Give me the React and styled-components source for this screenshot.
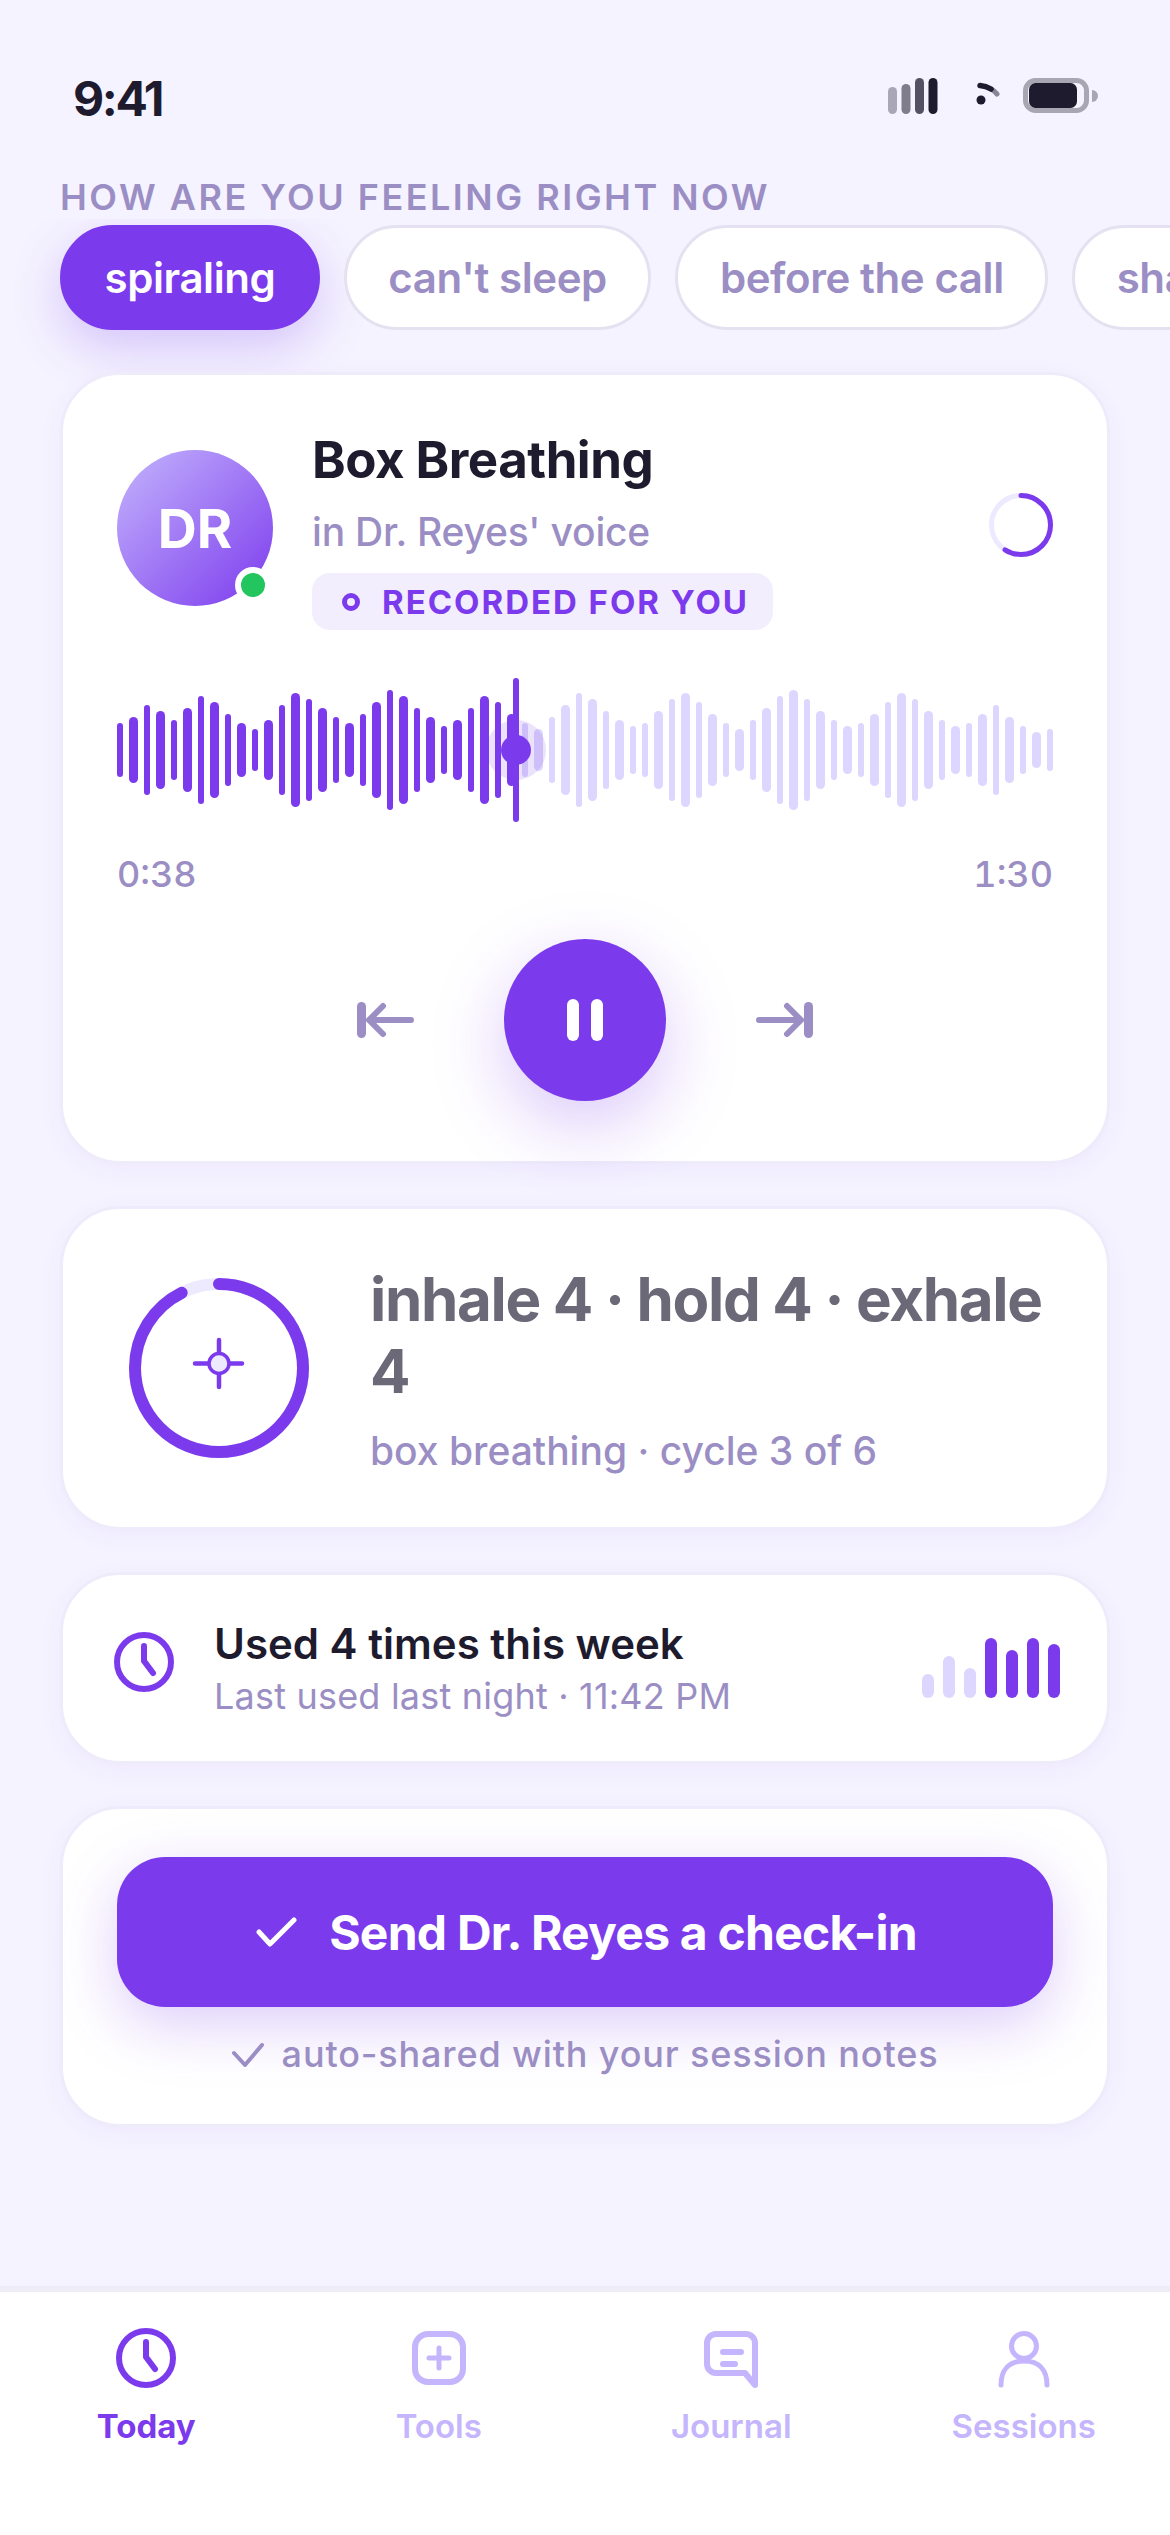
import React from 'react';
import styled, { createGlobalStyle } from 'styled-components';

const PURPLE = '#7c3aed';
const MUTED = '#9b8ec4';
const INK = '#1e1b2e';
const LILAC = '#ddd6fe';
const TAB_OFF = '#c4b5fd';

const GlobalStyle = createGlobalStyle`
  html, body {
    margin: 0;
    padding: 0;
    background: #f5f3ff;
  }
  * { box-sizing: border-box; }
  body {
    font-family: Inter, "Noto Sans", sans-serif;
    -webkit-font-smoothing: antialiased;
  }
`;

const Screen = styled.div`
  width: 1170px;
  height: 2535px;
  display: flex;
  flex-direction: column;
  overflow: hidden;
  background: #f5f3ff;
`;

const Main = styled.main`
  flex: 1;
  min-height: 0;
`;

const StatusBar = styled.div`
  height: 175px;
  padding: 21px 72px 0;
  display: flex;
  align-items: center;
  justify-content: space-between;
`;

const Clock = styled.span`
  font-size: 48px;
  font-weight: 700;
  letter-spacing: -0.05em;
  color: ${INK};
  margin-left: 1px;
`;

const StatusIcons = styled.div`
  display: flex;
  align-items: center;
  margin-bottom: 4px;
`;

const FeelingLabel = styled.div`
  padding: 0 60px;
  font-size: 36px;
  line-height: 44px;
  font-weight: 600;
  letter-spacing: 2.5px;
  color: ${MUTED};
  text-transform: uppercase;
`;

// bottom padding leaves room for the active chip's glow, the margin takes it back
const ChipRow = styled.div`
  display: flex;
  gap: 24px;
  padding: 6px 0 60px 60px;
  margin-bottom: -60px;
  overflow: hidden;
`;

const Chip = styled.div`
  flex: none;
  height: 105px;
  padding: 0 41.5px;
  display: flex;
  align-items: center;
  border-radius: 60px;
  font-size: 42px;
  font-weight: 600;
  letter-spacing: -0.01em;
  background: ${(p) => (p.$active ? PURPLE : '#fff')};
  color: ${(p) => (p.$active ? '#fff' : MUTED)};
  border: 3px solid ${(p) => (p.$active ? PURPLE : '#e5e1f1')};
  box-shadow: ${(p) => (p.$active ? '0 18px 48px rgba(124,58,237,.25)' : 'none')};
`;

const Stack = styled.div`
  display: flex;
  flex-direction: column;
  gap: 42px;
  padding: 42px 60px 0;
`;

const Card = styled.section`
  background: #fff;
  border: 3px solid #eeebfb;
  border-radius: 60px;
  box-shadow: 0 6px 24px rgba(124, 58, 237, 0.05);
`;

const PlayerCard = styled(Card)`
  height: 792px;
  padding: 54px 54px 0;
`;

const PlayerHead = styled.div`
  display: flex;
  align-items: center;
  gap: 39px;
`;

const Avatar = styled.div`
  position: relative;
  flex: none;
  width: 156px;
  height: 156px;
  margin-bottom: 3px;
  border-radius: 50%;
  background: linear-gradient(135deg, #c4b5fd, ${PURPLE});
  color: #fff;
  font-size: 54px;
  font-weight: 700;
  display: flex;
  align-items: center;
  justify-content: center;
`;

const OnlineDot = styled.span`
  position: absolute;
  right: 2px;
  bottom: 3px;
  width: 36px;
  height: 36px;
  border-radius: 50%;
  background: #22c55e;
  border: 6px solid #fff;
`;

const HeadText = styled.div`
  flex: 1;
  display: flex;
  flex-direction: column;
  align-items: flex-start;
  gap: 18px;
`;

const TrackTitle = styled.h1`
  margin: 0;
  font-size: 51px;
  line-height: 61px;
  font-weight: 700;
  letter-spacing: -0.01em;
  color: ${INK};
`;

const TrackVoice = styled.div`
  font-size: 39px;
  line-height: 47px;
  font-weight: 500;
  letter-spacing: -0.005em;
  color: ${MUTED};
`;

const RecordedBadge = styled.div`
  height: 57px;
  padding: 0 24px 0 30px;
  display: flex;
  align-items: center;
  gap: 22px;
  border-radius: 18px;
  background: #f3eefe;
  color: ${PURPLE};
  font-size: 33px;
  font-weight: 700;
  letter-spacing: 0.06em;
`;

const SpinnerRing = styled.svg`
  flex: none;
  margin-bottom: 9px;
`;

const Wave = styled.div`
  position: relative;
  height: 144px;
  margin-top: 48px;
  display: flex;
  align-items: center;
  gap: 6px;
`;

const WaveBar = styled.span`
  flex: none;
  width: ${(p) => p.$w}px;
  border-radius: 6px;
  background: ${(p) => (p.$played ? PURPLE : LILAC)};
`;

const Playhead = styled.div`
  position: absolute;
  top: 0;
  bottom: 0;
  width: 6px;
  border-radius: 3px;
  background: ${PURPLE};
`;

const KnobHalo = styled.span`
  position: absolute;
  left: 50%;
  top: 50%;
  width: 60px;
  height: 60px;
  margin: -30px 0 0 -30px;
  border-radius: 50%;
  background: rgba(124, 58, 237, 0.15);
`;

const Knob = styled.span`
  position: absolute;
  left: 50%;
  top: 50%;
  width: 30px;
  height: 30px;
  margin: -15px 0 0 -15px;
  border-radius: 50%;
  background: ${PURPLE};
`;

const TimeRow = styled.div`
  margin-top: 30px;
  display: flex;
  justify-content: space-between;
  font-size: 36px;
  line-height: 44px;
  font-weight: 500;
  font-variant-numeric: tabular-nums;
  color: ${MUTED};
`;

const Controls = styled.div`
  margin-top: 43px;
  display: flex;
  align-items: center;
  justify-content: center;
  gap: 90px;
`;

const SkipIcon = styled.svg`
  flex: none;
  transform: ${(p) => (p.$flip ? 'scaleX(-1)' : 'none')};
`;

const PlayButton = styled.div`
  width: 162px;
  height: 162px;
  border-radius: 50%;
  background: ${PURPLE};
  display: flex;
  align-items: center;
  justify-content: center;
  gap: 12px;
  box-shadow: 0 24px 72px rgba(124, 58, 237, 0.28);
`;

const PauseBar = styled.span`
  width: 12px;
  height: 42px;
  border-radius: 6px;
  background: #fff;
`;

const BreathCard = styled(Card)`
  height: 324px;
  padding: 0 51px 0 66px;
  display: flex;
  align-items: center;
  gap: 61px;
`;

const BreathRing = styled.svg`
  flex: none;
`;

const BreathText = styled.div`
  flex: 1;
  min-width: 0;
  display: flex;
  flex-direction: column;
  gap: 20px;
`;

const BreathTitle = styled.div`
  font-size: 60px;
  line-height: 72px;
  font-weight: 700;
  letter-spacing: -0.022em;
  color: #6b6877;
`;

const BreathSub = styled.div`
  font-size: 39px;
  line-height: 47px;
  font-weight: 500;
  color: ${MUTED};
`;

const UsageCard = styled(Card)`
  height: 192px;
  padding: 0 47px 0 51px;
  display: flex;
  align-items: center;
  gap: 40px;
`;

const UsageClock = styled.div`
  flex: none;
  height: 60px;
  margin-bottom: 12px;
`;

const UsageText = styled.div`
  flex: 1;
  display: flex;
  flex-direction: column;
  gap: 6px;
`;

const UsageTitle = styled.div`
  font-size: 42px;
  line-height: 50px;
  font-weight: 600;
  color: ${INK};
`;

const UsageSub = styled.div`
  font-size: 36px;
  line-height: 43px;
  font-weight: 400;
  letter-spacing: 0.2px;
  color: ${MUTED};
`;

const MiniBars = styled.div`
  display: flex;
  align-items: flex-end;
  gap: 9px;
  height: 60px;
`;

const MiniBar = styled.span`
  width: 12px;
  border-radius: 6px;
  background: ${(p) => (p.$on ? PURPLE : LILAC)};
`;

const CheckinCard = styled(Card)`
  height: 321px;
  padding: 48px 54px 0;
  display: flex;
  flex-direction: column;
  gap: 26px;
`;

const CheckinButton = styled.div`
  flex: none;
  height: 150px;
  border-radius: 48px;
  background: ${PURPLE};
  color: #fff;
  font-size: 48px;
  font-weight: 700;
  letter-spacing: -0.016em;
  display: flex;
  align-items: center;
  justify-content: center;
  gap: 32px;
  box-shadow: 0 18px 60px rgba(124, 58, 237, 0.25);
`;

const CheckinNote = styled.div`
  display: flex;
  align-items: center;
  justify-content: center;
  gap: 18px;
  font-size: 36px;
  line-height: 43px;
  font-weight: 500;
  letter-spacing: 0.86px;
  color: ${MUTED};
`;

const TabBar = styled.nav`
  flex: none;
  height: 249px;
  padding-top: 36px;
  display: grid;
  grid-template-columns: repeat(4, 1fr);
  align-items: start;
  background: #fff;
  border-top: 6px solid #eeedf7;
`;

const Tab = styled.div`
  display: flex;
  flex-direction: column;
  align-items: center;
  gap: 18px;
  font-size: 33px;
  line-height: 40px;
  font-weight: ${(p) => (p.$active ? 700 : 600)};
  color: ${(p) => (p.$active ? PURPLE : TAB_OFF)};
`;

// [width, height] of every waveform bar, left to right
const WAVE = [
  [6, 54], [9, 66], [6, 90], [9, 78], [6, 60], [9, 84], [6, 108], [9, 96], [6, 72], [9, 54],
  [6, 42], [9, 60], [6, 90], [9, 114], [6, 102], [9, 84], [6, 66], [9, 54], [6, 72], [9, 96],
  [6, 120], [9, 108], [6, 84], [9, 66], [6, 48], [9, 60], [6, 84], [9, 108], [6, 96], [9, 72],
  [6, 54], [9, 42], [6, 66], [9, 90], [6, 114], [9, 102], [6, 78], [9, 60], [6, 48], [6, 54],
  [9, 78], [6, 102], [9, 114], [6, 96], [9, 72], [6, 54], [9, 42], [6, 60], [9, 84], [6, 108],
  [9, 120], [6, 102], [9, 78], [6, 60], [9, 48], [6, 54], [9, 72], [6, 96], [9, 114], [6, 102],
  [9, 78], [6, 60], [9, 48], [6, 54], [9, 72], [6, 90], [9, 66], [6, 48], [9, 36], [6, 42],
];

const PLAYED = 30;
const PROGRESS = 38 / 90;
const WEEK = [24, 42, 30, 60, 48, 60, 54];

const Signal = () => (
  <svg width="50" height="36" viewBox="0 0 50 36">
    <rect x="0" y="9" width="9" height="27" rx="4.5" fill={INK} opacity="0.35" />
    <rect x="13.5" y="6" width="9" height="30" rx="4.5" fill={INK} opacity="0.55" />
    <rect x="27" y="0" width="9" height="36" rx="4.5" fill={INK} opacity="0.75" />
    <rect x="40.5" y="0" width="9" height="36" rx="4.5" fill={INK} />
  </svg>
);

const Wifi = () => (
  <svg width="30" height="36" viewBox="0 0 30 36" style={{ margin: '0 19px 0 36px' }}>
    <circle cx="7" cy="22" r="4.5" fill={INK} />
    <path d="M6 7.5 Q12 8 17 11" fill="none" stroke={INK} strokeWidth="5.5" strokeLinecap="round" />
    <path d="M17 11 Q21 13 23 16" fill="none" stroke={INK} strokeOpacity="0.5" strokeWidth="5" strokeLinecap="round" />
  </svg>
);

const Battery = () => (
  <svg width="75" height="36" viewBox="0 0 75 36">
    <rect x="2.5" y="2.5" width="61" height="30" rx="10" fill="none" stroke="#a9a6b4" strokeWidth="5" />
    <rect x="6" y="5" width="48" height="25" rx="6.5" fill={INK} />
    <path d="M69 12 a6 6 0 0 1 0 12 z" fill="#a9a6b4" />
  </svg>
);

const SkipGlyph = ({ flip }) => (
  <SkipIcon $flip={flip} width="57" height="36" viewBox="0 0 57 36" fill="none" stroke={MUTED} strokeLinecap="round" strokeLinejoin="round">
    <path d="M4.5 4.5 V31.5" strokeWidth="9" />
    <path d="M54 18 H12 M26 4 L12 18 L26 32" strokeWidth="6" />
  </SkipIcon>
);

const ClockGlyph = ({ color }) => (
  <svg width="60" height="60" viewBox="0 0 60 60" fill="none" stroke={color} strokeWidth="6" strokeLinecap="round" strokeLinejoin="round">
    <circle cx="30" cy="30" r="27" />
    <path d="M30 14 V29 L39 41" />
  </svg>
);

const App = () => (
  <Screen>
    <GlobalStyle />
    <Main>
      <StatusBar>
        <Clock>9:41</Clock>
        <StatusIcons>
          <Signal />
          <Wifi />
          <Battery />
        </StatusIcons>
      </StatusBar>

      <FeelingLabel>How are you feeling right now</FeelingLabel>
      <ChipRow>
        <Chip $active>spiraling</Chip>
        <Chip>can't sleep</Chip>
        <Chip>before the call</Chip>
        <Chip>shaky</Chip>
      </ChipRow>

      <Stack>
        <PlayerCard>
          <PlayerHead>
            <Avatar>
              DR
              <OnlineDot />
            </Avatar>
            <HeadText>
              <TrackTitle>Box Breathing</TrackTitle>
              <TrackVoice>in Dr. Reyes' voice</TrackVoice>
              <RecordedBadge>
                <svg width="18" height="18" viewBox="0 0 18 18">
                  <circle cx="9" cy="9" r="6.5" fill="none" stroke={PURPLE} strokeWidth="5" />
                </svg>
                RECORDED FOR YOU
              </RecordedBadge>
            </HeadText>
            <SpinnerRing width="64" height="64" viewBox="0 0 64 64" fill="none" strokeWidth="5">
              <circle cx="32" cy="32" r="29.5" stroke="#ede9fe" />
              <circle
                cx="32"
                cy="32"
                r="29.5"
                stroke={PURPLE}
                strokeLinecap="round"
                strokeDasharray={`${2 * Math.PI * 29.5 * 0.59} 400`}
                transform="rotate(-90 32 32)"
              />
            </SpinnerRing>
          </PlayerHead>

          <Wave>
            {WAVE.map(([w, h], i) => (
              <WaveBar key={i} $w={w} $played={i < PLAYED} style={{ height: h }} />
            ))}
            <Playhead style={{ left: `calc(${PROGRESS * 100}% + 1px)` }}>
              <KnobHalo />
              <Knob />
            </Playhead>
          </Wave>

          <TimeRow>
            <span>0:38</span>
            <span>1:30</span>
          </TimeRow>

          <Controls>
            <SkipGlyph />
            <PlayButton>
              <PauseBar />
              <PauseBar />
            </PlayButton>
            <SkipGlyph flip />
          </Controls>
        </PlayerCard>

        <BreathCard>
          <BreathRing width="180" height="180" viewBox="0 0 180 180" fill="none">
            <circle cx="90" cy="90" r="84" stroke="#ede9fe" strokeWidth="12" />
            <circle
              cx="90"
              cy="90"
              r="84"
              stroke={PURPLE}
              strokeWidth="12"
              strokeLinecap="round"
              strokeDasharray={`${2 * Math.PI * 84 * 0.925} 600`}
              transform="rotate(-90 90 90)"
            />
            <path d="M90 62 V109 M66 85.5 H113" stroke={PURPLE} strokeWidth="4.5" strokeLinecap="round" />
            <circle cx="90" cy="85.5" r="10" fill="#ede9fe" stroke={PURPLE} strokeWidth="3.5" />
          </BreathRing>
          <BreathText>
            <BreathTitle>inhale 4 · hold 4 · exhale 4</BreathTitle>
            <BreathSub>box breathing · cycle 3 of 6</BreathSub>
          </BreathText>
        </BreathCard>

        <UsageCard>
          <UsageClock>
            <ClockGlyph color={PURPLE} />
          </UsageClock>
          <UsageText>
            <UsageTitle>Used 4 times this week</UsageTitle>
            <UsageSub>Last used last night · 11:42 PM</UsageSub>
          </UsageText>
          <MiniBars>
            {WEEK.map((h, i) => (
              <MiniBar key={i} $on={i > 2} style={{ height: h }} />
            ))}
          </MiniBars>
        </UsageCard>

        <CheckinCard>
          <CheckinButton>
            <svg width="44" height="30" viewBox="0 0 44 30" fill="none" stroke="#fff" strokeWidth="5" strokeLinecap="round" strokeLinejoin="round">
              <path d="M6 15 L17 27 L41 3" />
            </svg>
            Send Dr. Reyes a check-in
          </CheckinButton>
          <CheckinNote>
            <svg width="32" height="24" viewBox="0 0 32 24" fill="none" stroke={MUTED} strokeWidth="4" strokeLinecap="round" strokeLinejoin="round">
              <path d="M2 10 L13 22 L30 2" />
            </svg>
            auto-shared with your session notes
          </CheckinNote>
        </CheckinCard>
      </Stack>
    </Main>

    <TabBar>
      <Tab $active>
        <ClockGlyph color={PURPLE} />
        Today
      </Tab>
      <Tab>
        <svg width="60" height="60" viewBox="0 0 60 60" fill="none" stroke={TAB_OFF} strokeWidth="6" strokeLinecap="round">
          <rect x="6" y="6" width="48" height="48" rx="13" />
          <path d="M30 20 V40 M20 30 H40" strokeWidth="5" />
        </svg>
        Tools
      </Tab>
      <Tab>
        <svg width="60" height="60" viewBox="0 0 60 60" fill="none" stroke={TAB_OFF} strokeWidth="6" strokeLinecap="round" strokeLinejoin="round">
          <path d="M15 6 H45 A9 9 0 0 1 54 15 V57 L44 45 H15 A9 9 0 0 1 6 36 V15 A9 9 0 0 1 15 6 Z" />
          <path d="M22 24 H40 M22 36 H34" />
        </svg>
        Journal
      </Tab>
      <Tab>
        <svg width="60" height="60" viewBox="0 0 60 60" fill="none" stroke={TAB_OFF} strokeWidth="5" strokeLinecap="round">
          <circle cx="30" cy="18" r="12.5" />
          <path d="M7 57 C7 42 15 33 30 33 C45 33 53 42 53 57" />
        </svg>
        Sessions
      </Tab>
    </TabBar>
  </Screen>
);

export default App;
